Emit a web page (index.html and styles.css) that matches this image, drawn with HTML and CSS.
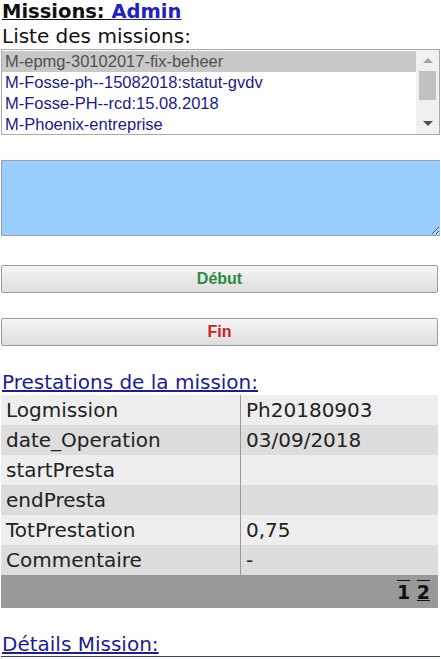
FILE: index.html
```html
<!DOCTYPE html>
<html lang="fr">
<head>
    <meta charset="UTF-8">
    <meta name="viewport" content="width=device-width, initial-scale=1.0">
    <title>Missions</title>
    <link rel="stylesheet" href="styles.css">
</head>
<body>
    <h1 class="title">Missions: <a href="#">Admin</a></h1>
    <div class="label">Liste des missions:</div>

    <div class="listbox">
        <div class="options">
            <div class="option selected">M-epmg-30102017-fix-beheer</div>
            <div class="option">M-Fosse-ph--15082018:statut-gvdv</div>
            <div class="option">M-Fosse-PH--rcd:15.08.2018</div>
            <div class="option">M-Phoenix-entreprise</div>
        </div>
        <div class="scrollbar">
            <span class="arrow up"></span>
            <span class="thumb"></span>
            <span class="track"></span>
            <span class="arrow down"></span>
        </div>
    </div>

    <textarea class="note"></textarea>

    <button class="action start">Début</button>
    <button class="action stop">Fin</button>

    <h2 class="section"><a href="#">Prestations de la mission:</a></h2>
    <table class="presta">
        <tr><td>Logmission</td><td>Ph20180903</td></tr>
        <tr><td>date_Operation</td><td>03/09/2018</td></tr>
        <tr><td>startPresta</td><td></td></tr>
        <tr><td>endPresta</td><td></td></tr>
        <tr><td>TotPrestation</td><td>0,75</td></tr>
        <tr><td>Commentaire</td><td>-</td></tr>
        <tr class="pager"><td colspan="2"><span class="page current">1</span> <a class="page" href="#">2</a></td></tr>
    </table>

    <h2 class="section details"><a href="#">Détails Mission:</a></h2>
    <div class="details-line"></div>
</body>
</html>
```

FILE: styles.css
```css
body {
    margin: 0 1px;
    font-family: "DejaVu Sans", Verdana, sans-serif;
    color: #111;
    background: white;
}
a {
    color: #1c1c96;
}
.title {
    font-size: 19.5px;
    font-weight: bold;
    line-height: 24px;
    margin: 0 0 0 1px;
    text-decoration: underline;
}
.title a {
    color: #2222c0;
}
.label {
    font-size: 20px;
    line-height: 24px;
    margin-left: 1px;
}
.listbox {
    display: flex;
    height: 84px;
    border: 1px solid #a9a9a9;
    margin-top: 1px;
    font-family: "Liberation Sans", Arial, sans-serif;
    font-size: 16.5px;
}
.options {
    flex: 1;
    padding-top: 1px;
}
.option {
    height: 21px;
    line-height: 21px;
    padding-left: 3px;
    color: #1a1a8c;
}
.option.selected {
    background: #c8c8c8;
    color: #505050;
}
.scrollbar {
    width: 23px;
    display: flex;
    flex-direction: column;
    align-items: center;
    background: #f0f0f0;
}
.arrow {
    width: 0;
    height: 5px;
    margin: 8px 0;
    border-left: 5px solid transparent;
    border-right: 5px solid transparent;
    box-sizing: border-box;
}
.arrow.up {
    border-bottom: 5px solid #a3a3a3;
}
.arrow.down {
    border-top: 5px solid #505050;
}
.thumb {
    width: 17px;
    height: 29px;
    background: #c1c1c1;
}
.track {
    flex: 1;
}
.note {
    display: block;
    box-sizing: border-box;
    width: 440px;
    height: 76px;
    margin: 25px 0 0;
    background: #99ccff;
    border: 1px solid #a0a0a0;
    resize: both;
}
.action {
    display: block;
    width: 437px;
    height: 28px;
    margin-top: 29px;
    border: 1px solid #9a9a9a;
    border-radius: 2px;
    background: linear-gradient(#f6f6f6, #dddddd);
    font-family: "Liberation Sans", Arial, sans-serif;
    font-size: 16px;
    font-weight: bold;
}
.action.stop {
    margin-top: 25px;
}
.start {
    color: #2a8c40;
}
.stop {
    color: #cc2020;
}
.section {
    font-size: 20px;
    font-weight: normal;
    line-height: 22px;
    margin: 25px 0 0 1px;
}
.presta {
    width: 437px;
    border-collapse: collapse;
    margin-top: 2px;
    font-size: 20px;
    color: #222;
}
.presta td {
    height: 30px;
    padding: 0 5px;
    background: #eeeeee;
}
.presta td:first-child {
    width: 229px;
    border-right: 1px solid #999;
}
.presta tr:nth-child(even) td {
    background: #dddddd;
}
.presta .pager td {
    height: 33px;
    background: #999999;
    text-align: right;
    padding-right: 8px;
    font-size: 19px;
    font-weight: bold;
    border-right: none;
}
.page {
    color: #111;
    text-decoration: overline;
}
a.page {
    text-decoration: overline underline;
}
.details {
    line-height: 24px;
    margin-top: 24px;
}
.details-line {
    border-top: 1px solid #334466;
}
```
